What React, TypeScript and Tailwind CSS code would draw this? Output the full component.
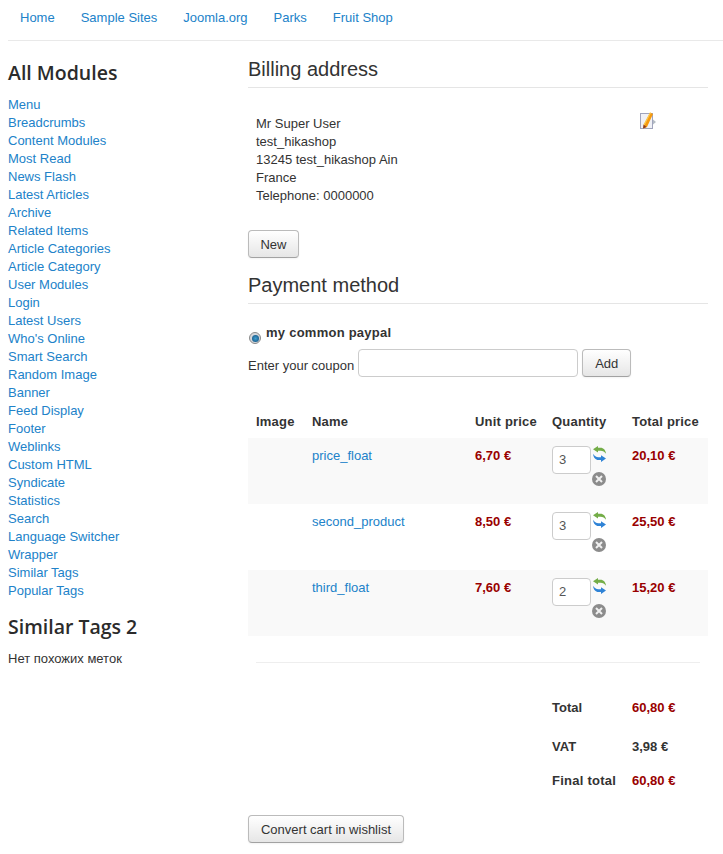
const navLinks = ["Home", "Sample Sites", "Joomla.org", "Parks", "Fruit Shop"];

const modules = [
  "Menu", "Breadcrumbs", "Content Modules", "Most Read", "News Flash", "Latest Articles",
  "Archive", "Related Items", "Article Categories", "Article Category", "User Modules", "Login",
  "Latest Users", "Who's Online", "Smart Search", "Random Image", "Banner", "Feed Display",
  "Footer", "Weblinks", "Custom HTML", "Syndicate", "Statistics", "Search",
  "Language Switcher", "Wrapper", "Similar Tags", "Popular Tags",
];

const products = [
  { name: "price_float", unit: "6,70 €", qty: "3", total: "20,10 €", bg: "bg-[#f9f9f9]" },
  { name: "second_product", unit: "8,50 €", qty: "3", total: "25,50 €", bg: "bg-white" },
  { name: "third_float", unit: "7,60 €", qty: "2", total: "15,20 €", bg: "bg-[#f9f9f9]" },
];

const btn =
  "h-[28px] rounded-[4px] border border-[#bbbbbb] border-b-[#a2a2a2] bg-gradient-to-b from-white to-[#e6e6e6] pt-px text-[13px] text-[#333333] shadow-[0_1px_2px_rgba(0,0,0,0.05)]";

function EditIcon() {
  return (
    <svg width="17" height="18" viewBox="0 0 17 18" className="block">
      <rect x="0.5" y="1.5" width="12" height="15" fill="#f0f1f6" stroke="#a0a4bc" />
      <path d="M13 7.5l3 2.5-3 2.5z" fill="#b4bcc4" />
      <path d="M10 0.5l3 1.5-6 13-3.5 1.5 0.5-4z" fill="#f59a10" />
      <path d="M10 0.5l1 .5L4.5 13.5 3.5 12.5z" fill="#fcc94c" />
      <path d="M3.5 12.5l3 2.5-3.5 1.5z" fill="#8a3a20" />
    </svg>
  );
}

function RefreshIcon() {
  return (
    <svg width="15" height="16" viewBox="0 0 15 16" className="block">
      <path d="M6 0L1 3.2 6 6.6V4.7h2.5c2.5 0 4 1 5.5 3C13.6 4 11.5 1.8 8.5 1.8H6z" fill="#74ad48" />
      <path d="M9 16l5-3.4L9 9.2v2H6.500C4 11.200 2.500 10 1 7.800 1.400 11.600 3.500 14.100 6.500 14.100H9z" fill="#2f83d6" />
    </svg>
  );
}

function DeleteIcon() {
  return (
    <svg width="14" height="14" viewBox="0 0 14 14" className="block">
      <circle cx="7" cy="7" r="7" fill="#8c8c8c" />
      <path d="M4 4l6 6M10 4l-6 6" stroke="#f0f0f0" strokeWidth="2" />
    </svg>
  );
}

export default function App() {
  return (
    <div className="min-h-[854px] overflow-hidden bg-white font-['Liberation_Sans',Arial,sans-serif] text-[13px] leading-[18px] text-[#333333]">
      {/* Top nav */}
      <nav className="ml-2 flex h-[41px] items-start gap-[2px] border-b border-[#e9e9e9] pt-[9px]">
        {navLinks.map((l) => (
          <a key={l} className="px-3 text-[#2182c9]">
            {l}
          </a>
        ))}
      </nav>

      <div className="flex pl-2 pr-[15px]">
        {/* Sidebar */}
        <aside className="w-[240px] shrink-0">
          <h3 className="mt-[19px] font-['Open_Sans',sans-serif] text-[19.5px] leading-[26px] font-semibold text-[#2b2b2b]">
            All Modules
          </h3>
          <ul className="mt-[10px]">
            {modules.map((m) => (
              <li key={m} className="text-[#2182c9]">
                {m}
              </li>
            ))}
          </ul>
          <h3 className="mt-[14px] font-['Open_Sans',sans-serif] text-[19.5px] leading-[26px] font-semibold text-[#2b2b2b]">
            Similar Tags 2
          </h3>
          <p className="mt-[10px]">Нет похожих меток</p>
        </aside>

        {/* Main */}
        <main className="min-w-0 flex-1">
          <h2 className="mt-[15px] border-b border-[#e5e5e5] pb-[4px] text-[20px] leading-[27px] font-normal">
            Billing address
          </h2>
          <div className="relative mt-[27px] pl-2">
            <div>Mr Super User</div>
            <div>test_hikashop</div>
            <div>13245 test_hikashop Ain</div>
            <div>France</div>
            <div>Telephone: 0000000</div>
            <div className="absolute top-[-3px] left-[392px]">
              <EditIcon />
            </div>
          </div>
          <button className={`${btn} mt-[25px] block w-[51px]`}>New</button>

          <h2 className="mt-[14px] border-b border-[#e5e5e5] pb-[4px] text-[20px] leading-[27px] font-normal">
            Payment method
          </h2>
          <div className="mt-[20px] flex h-[20px] items-start">
            <span className="mt-[8px] ml-[1px] flex h-[12px] w-[12px] items-center justify-center rounded-full border border-[#8a8a8a] bg-[#d4d7db]">
              <span className="h-[7px] w-[7px] rounded-full bg-[radial-gradient(circle,#3f9ed0,#0f4a78)]" />
            </span>
            <b className="ml-[5px] text-[13px] leading-[18px] font-bold tracking-[0.25px]">my common paypal</b>
          </div>
          <div className="mt-[5px] flex items-start">
            <span className="pt-[8px]">Enter your coupon</span>
            <input className="ml-[4px] h-[28px] w-[220px] rounded-[4px] border border-[#cccccc] bg-white" />
            <button className={`${btn} ml-[4px] w-[49px]`}>Add</button>
          </div>

          {/* Cart */}
          <table className="mt-[28px] w-[460px] table-fixed border-collapse">
            <colgroup>
              <col className="w-[56px]" />
              <col className="w-[163px]" />
              <col className="w-[77px]" />
              <col className="w-[80px]" />
              <col className="w-[84px]" />
            </colgroup>
            <thead>
              <tr className="h-[33px] text-left tracking-[0.2px]">
                <th className="px-2 font-bold">Image</th>
                <th className="px-2 font-bold">Name</th>
                <th className="px-2 font-bold whitespace-nowrap">Unit price</th>
                <th className="px-2 font-bold">Quantity</th>
                <th className="px-2 font-bold whitespace-nowrap">Total price</th>
              </tr>
            </thead>
            <tbody>
              {products.map((p) => (
                <tr key={p.name} className={`h-[66px] align-top ${p.bg}`}>
                  <td className="px-2 pt-[9px]" />
                  <td className="px-2 pt-[9px] text-[#2182c9]">{p.name}</td>
                  <td className="px-2 pt-[9px] font-bold text-[#990000]">{p.unit}</td>
                  <td className="px-2 pt-[8px]">
                    <div className="flex">
                      <div className="flex h-[28px] w-[39px] items-center rounded-[4px] border border-[#cccccc] bg-white pl-[6px] text-[#555555]">
                        {p.qty}
                      </div>
                      <div className="ml-[1px] flex flex-col">
                        <RefreshIcon />
                        <div className="mt-[10px]">
                          <DeleteIcon />
                        </div>
                      </div>
                    </div>
                  </td>
                  <td className="px-2 pt-[9px] font-bold text-[#990000]">{p.total}</td>
                </tr>
              ))}
            </tbody>
          </table>

          <hr className="mx-2 mt-[26px] border-0 border-t border-[#eeeeee]" />

          {/* Totals */}
          <div className="mt-[36px] ml-[304px] grid grid-cols-[80px_auto] font-bold">
            <div className="h-[39px]">Total</div>
            <div className="text-[#990000]">60,80 €</div>
            <div className="h-[34px]">VAT</div>
            <div>3,98 €</div>
            <div className="tracking-[0.25px] whitespace-nowrap">Final total</div>
            <div className="text-[#990000]">60,80 €</div>
          </div>

          <button className={`${btn} mt-[25px] block w-[156px]`}>Convert cart in wishlist</button>
        </main>
      </div>
    </div>
  );
}
